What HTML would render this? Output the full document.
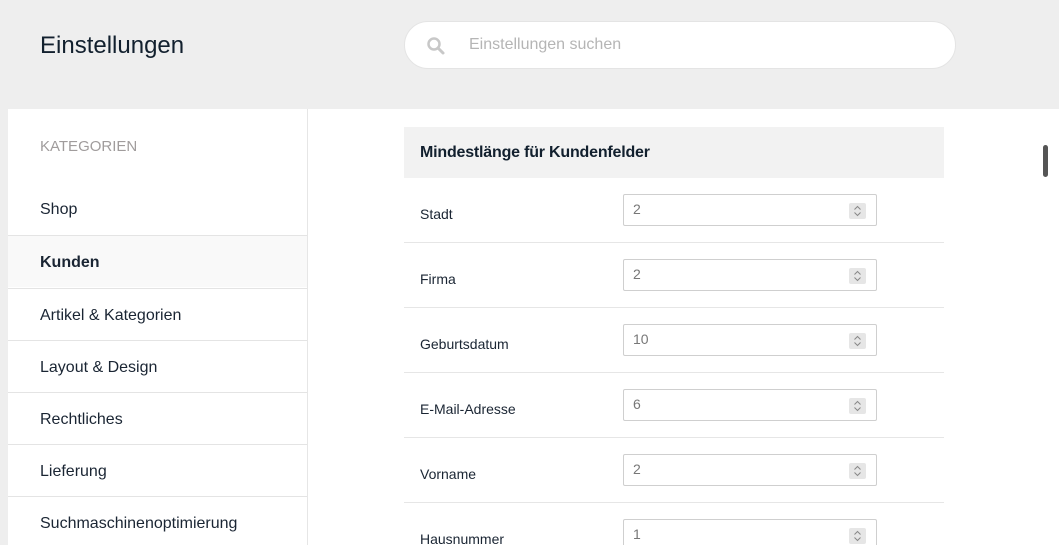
<!DOCTYPE html>
<html><head><style>
*{margin:0;padding:0;box-sizing:border-box}
html,body{width:1059px;height:545px;overflow:hidden}
body{background:#eeeeee;font-family:"Liberation Sans",sans-serif;position:relative;color:#1a2533}
.title{position:absolute;left:40px;top:32px;font-size:24px;color:#12202e}
.search{position:absolute;left:404px;top:21px;width:552px;height:48px;background:#fff;border:1px solid #e4e4e4;border-radius:24px}
.search span{position:absolute;left:64px;top:14px;font-size:16px;color:#b5b5b5}
.panel{position:absolute;left:8px;top:109px;width:1051px;height:436px;background:#fff;overflow:hidden}
.side{position:absolute;left:0;top:0;width:300px;height:436px;border-right:1px solid #e6e6e6}
.cat{position:absolute;left:32px;top:29px;font-size:15px;color:#a09c9c}
.item{position:absolute;left:0;width:299px;height:52px;border-top:1px solid #e4e4e4;font-size:16px;padding-left:32px;line-height:54px;color:#1a2533}
.hdr{position:absolute;left:396px;top:18px;width:540px;height:51px;background:#f2f2f2;font-size:16px;line-height:52px;padding-left:16px;color:#12202e;font-weight:bold;letter-spacing:-0.2px}
.row{position:absolute;left:396px;width:540px;height:65px;border-bottom:1px solid #e6e6e6}
.row label{position:absolute;left:16px;top:28px;font-size:14px;color:#1a2533}
.row .in{position:absolute;left:219px;top:16px;width:254px;height:32px;border:1px solid #cfcfcf;border-radius:2px;font-size:14px;color:#777;padding:6px 9px}
.sp{position:absolute;right:10px;top:8px;width:17px;height:16px;background:#e6e6e6;border-radius:2px}
.scroll{position:absolute;left:1043px;top:145px;width:5px;height:32px;background:#555;border-radius:3px}
</style></head><body>
<div class="title">Einstellungen</div>
<div class="search"><svg style="position:absolute;left:21px;top:14px" width="20" height="20" viewBox="0 0 20 20"><circle cx="8" cy="8" r="5.5" fill="none" stroke="#c8c8c8" stroke-width="2.5"/><line x1="12" y1="12" x2="17" y2="17" stroke="#c8c8c8" stroke-width="3" stroke-linecap="round"/></svg><span>Einstellungen suchen</span></div>
<div class="panel">
<div class="side">
<div class="cat">KATEGORIEN</div>
<div class="item" style="top:74px;border-top:none">Shop</div>
<div class="item" style="top:126px;background:#f9f9f9;font-weight:bold">Kunden</div>
<div class="item" style="top:179px">Artikel &amp; Kategorien</div>
<div class="item" style="top:231px">Layout &amp; Design</div>
<div class="item" style="top:283px">Rechtliches</div>
<div class="item" style="top:335px">Lieferung</div>
<div class="item" style="top:387px">Suchmaschinenoptimierung</div>
</div>
<div class="hdr">Mindestlänge für Kundenfelder</div>
<div class="row" style="top:69px"><label>Stadt</label><div class="in">2<svg class="sp" viewBox="0 0 17 16"><path d="M5.5 6.5l3-3 3 3M5.5 9.5l3 3 3-3" fill="none" stroke="#888" stroke-width="1"/></svg></div></div>
<div class="row" style="top:134px"><label>Firma</label><div class="in">2<svg class="sp" viewBox="0 0 17 16"><path d="M5.5 6.5l3-3 3 3M5.5 9.5l3 3 3-3" fill="none" stroke="#888" stroke-width="1"/></svg></div></div>
<div class="row" style="top:199px"><label>Geburtsdatum</label><div class="in">10<svg class="sp" viewBox="0 0 17 16"><path d="M5.5 6.5l3-3 3 3M5.5 9.5l3 3 3-3" fill="none" stroke="#888" stroke-width="1"/></svg></div></div>
<div class="row" style="top:264px"><label>E-Mail-Adresse</label><div class="in">6<svg class="sp" viewBox="0 0 17 16"><path d="M5.5 6.5l3-3 3 3M5.5 9.5l3 3 3-3" fill="none" stroke="#888" stroke-width="1"/></svg></div></div>
<div class="row" style="top:329px"><label>Vorname</label><div class="in">2<svg class="sp" viewBox="0 0 17 16"><path d="M5.5 6.5l3-3 3 3M5.5 9.5l3 3 3-3" fill="none" stroke="#888" stroke-width="1"/></svg></div></div>
<div class="row" style="top:394px"><label>Hausnummer</label><div class="in">1<svg class="sp" viewBox="0 0 17 16"><path d="M5.5 6.5l3-3 3 3M5.5 9.5l3 3 3-3" fill="none" stroke="#888" stroke-width="1"/></svg></div></div>
</div>
<div class="scroll"></div>
</body></html>
